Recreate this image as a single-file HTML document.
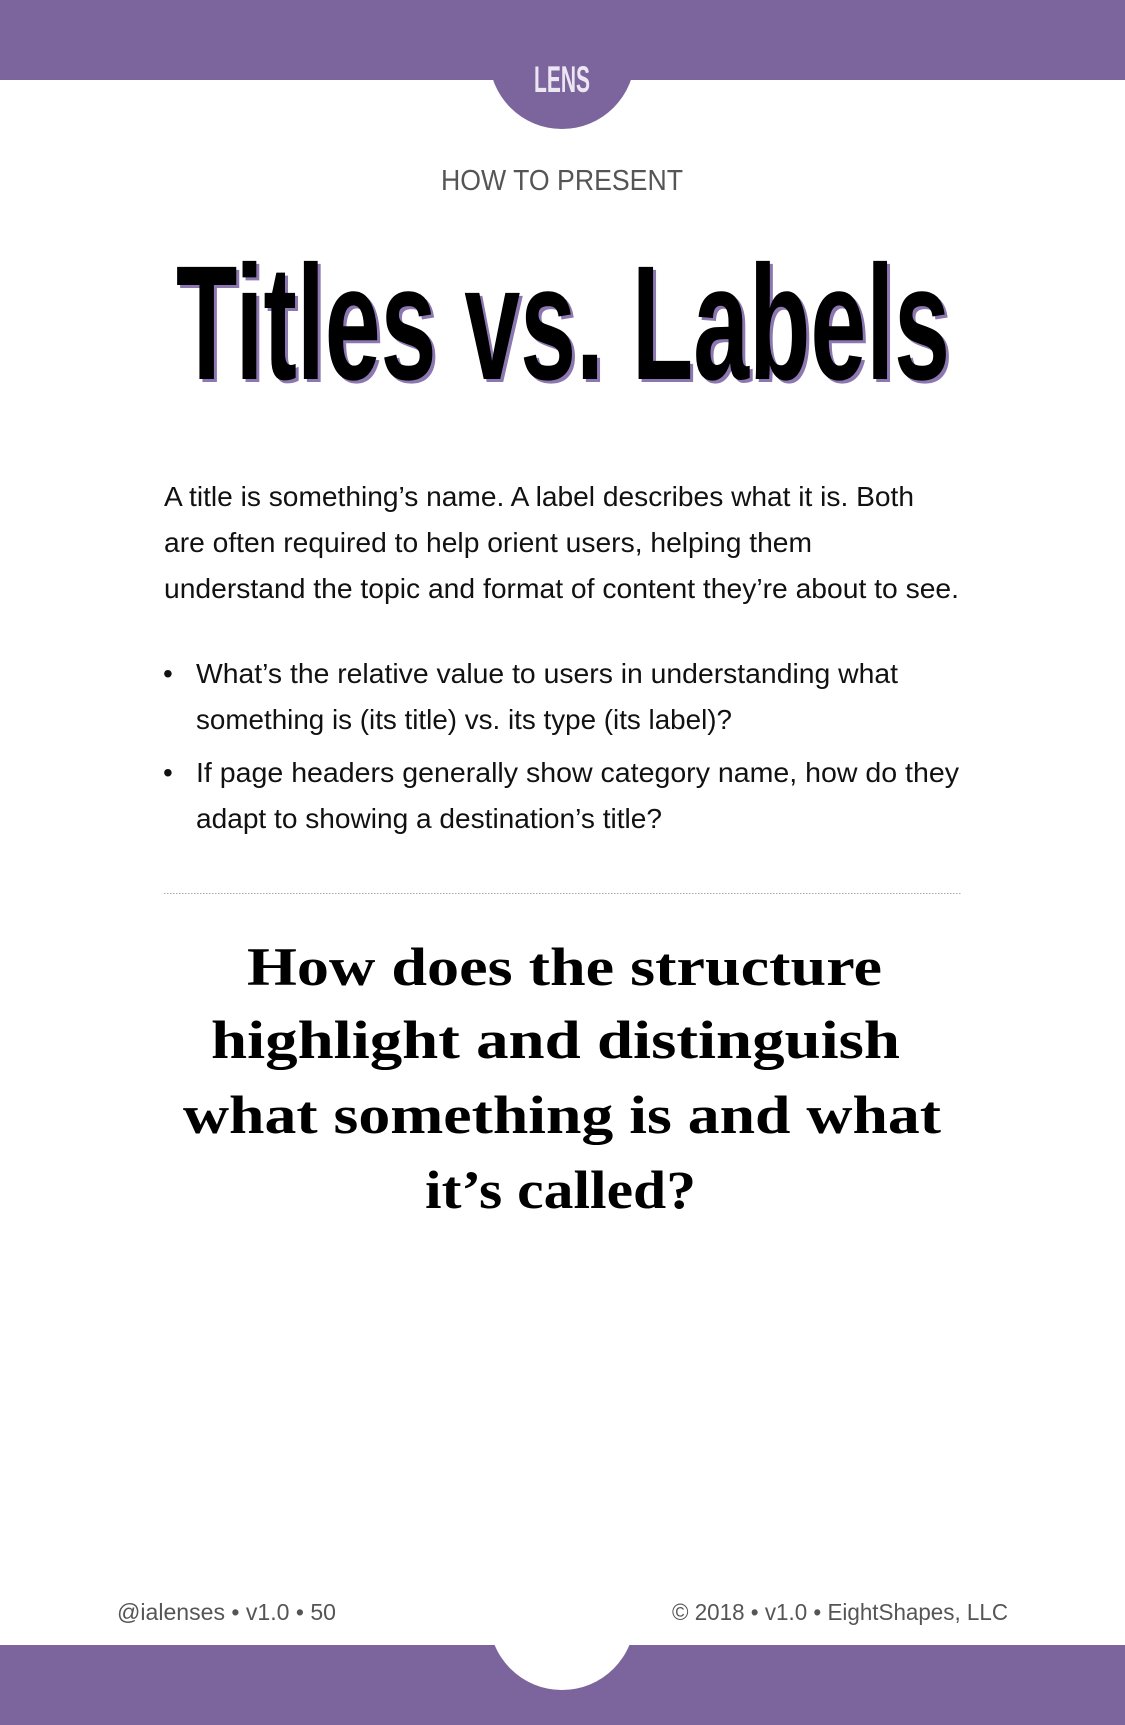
<!DOCTYPE html>
<html><head><meta charset="utf-8"><style>
html,body{margin:0;padding:0;background:#fff;}
svg{display:block;}
</style></head><body>
<svg width="1125" height="1725" viewBox="0 0 1125 1725" xmlns="http://www.w3.org/2000/svg">
<rect x="0" y="0" width="1125" height="80" fill="#7b659c"/>
<circle cx="562" cy="56" r="73" fill="#7b659c"/>
<text x="534" y="92" textLength="56" lengthAdjust="spacingAndGlyphs" font-family="Liberation Sans" font-weight="bold" font-size="37" fill="#ece6f3">LENS</text>
<text x="441" y="190" textLength="242" lengthAdjust="spacingAndGlyphs" font-family="Liberation Sans" font-size="29" fill="#555">HOW TO PRESENT</text>
<g font-family="Liberation Sans" font-weight="bold" font-size="163">
<text x="179" y="382" textLength="774" lengthAdjust="spacingAndGlyphs" fill="#8d77b0">Titles vs. Labels</text>
<text x="176" y="379" textLength="774" lengthAdjust="spacingAndGlyphs" fill="#000">Titles vs. Labels</text>
</g>
<g font-family="Liberation Sans" font-size="28" fill="#111">
<text x="164" y="506" textLength="750" lengthAdjust="spacingAndGlyphs">A title is something’s name. A label describes what it is. Both</text>
<text x="164" y="552" textLength="648" lengthAdjust="spacingAndGlyphs">are often required to help orient users, helping them</text>
<text x="164" y="598" textLength="795" lengthAdjust="spacingAndGlyphs">understand the topic and format of content they’re about to see.</text>
<text x="163" y="683">•</text>
<text x="196" y="683" textLength="702" lengthAdjust="spacingAndGlyphs">What’s the relative value to users in understanding what</text>
<text x="196" y="729" textLength="536" lengthAdjust="spacingAndGlyphs">something is (its title) vs. its type (its label)?</text>
<text x="163" y="782">•</text>
<text x="196" y="782" textLength="763" lengthAdjust="spacingAndGlyphs">If page headers generally show category name, how do they</text>
<text x="196" y="828" textLength="466" lengthAdjust="spacingAndGlyphs">adapt to showing a destination’s title?</text>
</g>
<line x1="164" y1="893.5" x2="961" y2="893.5" stroke="#aaa" stroke-width="1" stroke-dasharray="1.5,1.5"/>
<g font-family="Liberation Serif" font-weight="bold" font-size="54" fill="#000">
<text x="247" y="985" textLength="635" lengthAdjust="spacingAndGlyphs">How does the structure</text>
<text x="211" y="1058" textLength="689" lengthAdjust="spacingAndGlyphs">highlight and distinguish</text>
<text x="183" y="1133" textLength="758" lengthAdjust="spacingAndGlyphs">what something is and what</text>
<text x="425" y="1208" textLength="271" lengthAdjust="spacingAndGlyphs">it’s called?</text>
</g>
<g font-family="Liberation Sans" font-size="23" fill="#555">
<text x="117" y="1620" textLength="219" lengthAdjust="spacingAndGlyphs">@ialenses • v1.0 •  50</text>
<text x="672" y="1620" textLength="336" lengthAdjust="spacingAndGlyphs">© 2018 • v1.0 • EightShapes, LLC</text>
</g>
<rect x="0" y="1645" width="1125" height="80" fill="#7b659c"/>
<circle cx="562" cy="1617" r="73" fill="#fff"/>
</svg>
</body></html>
